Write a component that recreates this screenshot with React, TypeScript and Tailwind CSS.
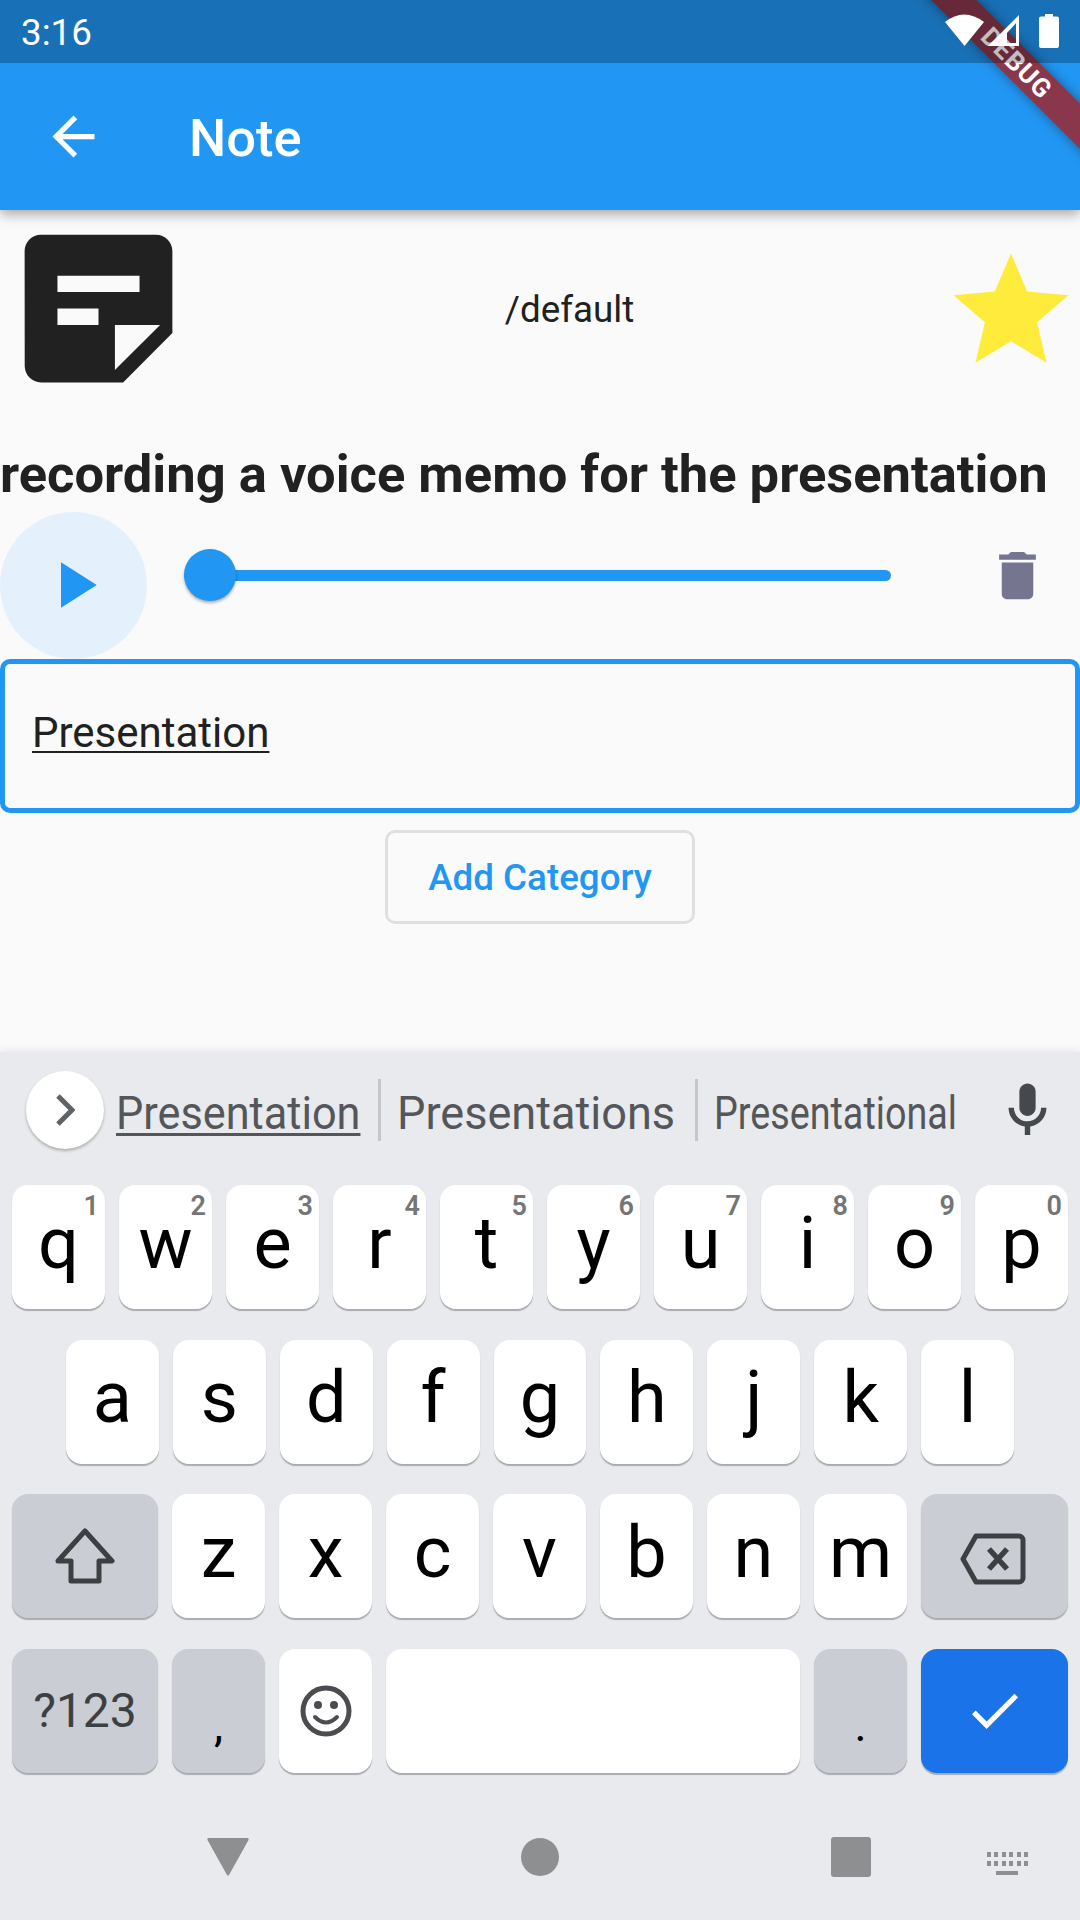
import React from "react";

const font = { fontFamily: "Roboto, sans-serif" };

function Key({ label, hint, className = "" }: { label?: React.ReactNode; hint?: string; className?: string }) {
  return (
    <div className={`relative h-[124px] rounded-[16px] flex items-center justify-center shadow-[0_2px_1px_#a9abb0] ${className}`}>
      {hint && <span className="absolute top-[5px] right-[6px] text-[27px] leading-[32px] font-semibold text-[#757575]">{hint}</span>}
      {label}
    </div>
  );
}

const Letter = ({ c }: { c: string }) => <span className="text-[72px] leading-none text-black pb-[7px]">{c}</span>;

function LetterKey({ c, hint }: { c: string; hint?: string }) {
  return <Key className="w-[93px] bg-white" label={<Letter c={c} />} hint={hint} />;
}

function App() {
  const row1 = "qwertyuiop".split("");
  const row2 = "asdfghjkl".split("");
  const row3 = "zxcvbnm".split("");
  return (
    <div style={font} className="relative w-[1080px] h-[1920px] overflow-hidden bg-[#fafafa] flex flex-col">
      {/* App bar */}
      <header className="relative z-10 h-[210px] shrink-0 bg-[#2196f3] pt-[63px] flex items-center shadow-[0_4px_12px_rgba(0,0,0,0.35)]">
        <svg viewBox="0 0 24 24" className="w-[63px] h-[63px] ml-[42px] fill-white">
          <path d="M20 11H7.83l5.59-5.59L12 4l-8 8 8 8 1.41-1.41L7.83 13H20v-2z" />
        </svg>
        <h1 className="ml-[84px] mt-[4px] text-[52.5px] font-medium text-white leading-none">Note</h1>
      </header>

      {/* Debug banner */}
      <div className="absolute z-20 left-[817px] top-[47px] w-[400px] h-[31.5px] rotate-45 bg-[#a81c1c]/[0.78] shadow-[0_0_12px_rgba(0,0,0,0.4)] flex items-center justify-center">
        <span className="text-[26px] font-bold tracking-[1px] text-white leading-none">DEBUG</span>
      </div>

      {/* Status bar */}
      <div className="absolute z-30 top-0 left-0 w-full h-[63px] bg-black/25 flex items-center">
        <span className="ml-[21px] mt-[4px] text-[36.75px] text-white leading-none">3:16</span>
        <svg viewBox="0 0 135 48" className="absolute left-[945px] top-[8px] w-[135px] h-[48px] fill-white">
          <path d="M0 14 Q19 -1 39 14 L19.500 38z" />
          <path d="M43 38 L74 7 V38z M71 15 L53 35 H71z" fillRule="evenodd" />
          <path d="M62 24.500 L53 35 H62z" />
          <path d="M100 6 V8.500 H96 a2 2 0 0 0 -2 2 V38 a2 2 0 0 0 2 2 H112 a2 2 0 0 0 2 -2 V10.500 a2 2 0 0 0 -2 -2 H108 V6z" />
        </svg>
      </div>

      {/* Note row */}
      <section className="h-[196px] shrink-0 flex items-center">
        <svg viewBox="0 0 24 24" className="w-[197px] h-[197px] fill-[#212121] shrink-0">
          <path d="M19,3H4.99C3.89,3,3,3.9,3,5l0.01,14c0,1.1,0.89,2,1.99,2h10l6-6V5C21,3.9,20.1,3,19,3z M7,8h10v2H7V8z M12,14H7v-2h5V14z M14,19.5V14h5.5L14,19.5z" />
        </svg>
        <span className="flex-1 mt-[4px] text-center text-[36.75px] text-[#212121] leading-none">/default</span>
        <svg viewBox="0 0 24 24" className="w-[138px] h-[138px] fill-[#ffeb3b] shrink-0 mt-[6px]">
          <path d="M12 17.27L18.18 21l-1.64-7.03L22 9.24l-7.19-.61L12 2 9.19 8.63 2 9.24l5.46 4.73L5.82 21z" />
        </svg>
      </section>

      <h2 className="h-[106px] shrink-0 pt-[41px] text-[52.5px] font-bold text-[#212121] leading-[55px] whitespace-nowrap">
        recording a voice memo for the presentation
      </h2>

      {/* Player */}
      <section className="h-[147px] shrink-0 flex items-start">
        <div className="w-[147px] h-[147px] rounded-full bg-[#e4f1fc] flex items-center justify-center shrink-0">
          <svg viewBox="0 0 24 24" className="w-[78px] h-[78px] fill-[#2196f3] mb-[2px]">
            <path d="M8 5v14l11-7z" />
          </svg>
        </div>
        <div className="relative ml-[37px] mt-[37px] w-[707px] h-[52px] flex items-center">
          <div className="w-full h-[11px] rounded-full bg-[#2196f3]" />
          <div className="absolute left-0 top-0 w-[52px] h-[52px] rounded-full bg-[#2196f3] shadow-[0_2px_3px_rgba(0,0,0,0.3)]" />
        </div>
        <svg viewBox="0 0 24 24" className="w-[63px] h-[63px] fill-[#757590] ml-[95px] mt-[32px] shrink-0">
          <path d="M6 19c0 1.100.9 2 2 2h8c1.100 0 2-.9 2-2V7H6v12zM19 4h-3.500l-1-1h-5l-1 1H5v2h14V4z" />
        </svg>
      </section>

      {/* Input */}
      <div className="h-[154px] shrink-0 border-[5px] border-[#2196f3] rounded-[10px] flex items-center pl-[27px] pb-[6px]">
        <span className="text-[42px] leading-none text-[#212121] underline underline-offset-[4px] decoration-[2px]">Presentation</span>
      </div>

      <button className="self-center mt-[17px] w-[310px] h-[94px] shrink-0 border-[3px] border-[#e0e0e0] rounded-[10px] pt-[2px] text-[36.75px] font-medium text-[#2196f3] leading-none">
        Add Category
      </button>

      <div className="flex-1" />

      {/* Keyboard */}
      <section className="relative h-[868px] shrink-0 bg-[#e8eaed] shadow-[0_-2px_8px_rgba(0,0,0,0.08)]">
        <div className="h-[116px] mb-[17px] flex items-center">
          <div className="ml-[26px] w-[78px] h-[78px] rounded-full bg-white shadow-[0_2px_3px_rgba(0,0,0,0.25)] flex items-center justify-center shrink-0">
            <svg viewBox="0 0 20 32" className="w-[20px] h-[32px] fill-none stroke-[#5f6368] stroke-[5]">
              <path d="M3 2 L17 16 L3 30" />
            </svg>
          </div>
          <span className="ml-[12px] w-[262px] shrink-0 pt-[6px] text-[46px] leading-none text-[#555659]">
            <span className="inline-block origin-left scale-x-[0.94] underline underline-offset-[4px] decoration-[3px]">Presentation</span>
          </span>
          <div className="w-[3px] h-[62px] bg-[#c4c6ca] shrink-0" />
          <span className="ml-[16px] w-[298px] shrink-0 pt-[6px] text-[46px] leading-none text-[#555659]">
            <span className="inline-block origin-left scale-x-[0.98]">Presentations</span>
          </span>
          <div className="w-[3px] h-[62px] bg-[#c4c6ca] shrink-0" />
          <span className="ml-[16px] w-[281px] shrink-0 pt-[6px] text-[46px] leading-none text-[#555659]">
            <span className="inline-block origin-left scale-x-[0.82]">Presentational</span>
          </span>
          <svg viewBox="0 0 24 24" className="w-[65px] h-[65px] fill-[#45484d] shrink-0">
            <path d="M12 14c1.660 0 3-1.340 3-3V5c0-1.660-1.340-3-3-3S9 3.340 9 5v6c0 1.660 1.340 3 3 3z" />
            <path d="M17 11c0 2.760-2.240 5-5 5s-5-2.240-5-5H5c0 3.530 2.610 6.430 6 6.920V21h2v-3.080c3.390-.49 6-3.390 6-6.920h-2z" />
          </svg>
        </div>

        <div className="flex flex-col gap-[30.5px]">
          <div className="flex gap-[14px] px-[12px]">
            {row1.map((c, i) => (
              <LetterKey key={c} c={c} hint={String((i + 1) % 10)} />
            ))}
          </div>
          <div className="flex gap-[14px] px-[66px]">
            {row2.map((c) => (
              <LetterKey key={c} c={c} />
            ))}
          </div>
          <div className="flex gap-[14px] px-[12px]">
            <Key
              className="w-[146px] bg-[#cacdd4]"
              label={
                <svg viewBox="0 0 60 56" className="w-[60px] h-[56px] fill-none stroke-[#3c4043] stroke-[5]" strokeLinejoin="round">
                  <path d="M30 3 L57 33 H44 V53 H16 V33 H3 z" />
                </svg>
              }
            />
            {row3.map((c) => (
              <LetterKey key={c} c={c} />
            ))}
            <Key
              className="w-[147px] bg-[#cacdd4]"
              label={
                <svg viewBox="0 0 66 52" className="w-[66px] h-[52px] mt-[5px] mr-[3px] fill-none stroke-[#3c4043] stroke-[5]" strokeLinejoin="round">
                  <path d="M3 26 L16 3 H59 a4 4 0 0 1 4 4 V45 a4 4 0 0 1 -4 4 H16 z" />
                  <path d="M29 16 L47 36 M47 16 L29 36" strokeWidth="5.500" />
                </svg>
              }
            />
          </div>
          <div className="flex gap-[14px] px-[12px]">
            <Key className="w-[146px] bg-[#cacdd4]" label={<span className="text-[48px] leading-none text-[#3c4043]">?123</span>} />
            <Key className="w-[93px] bg-[#cacdd4] pt-[29px]" label={<span className="text-[46px] leading-none text-black">,</span>} />
            <Key
              className="w-[93px] bg-white"
              label={
                <svg viewBox="0 0 52 52" className="w-[52px] h-[52px] fill-none stroke-[#4a4c50] stroke-[5]" strokeLinecap="round">
                  <circle cx="26" cy="26" r="23" />
                  <circle cx="18" cy="20" r="4" className="fill-[#4a4c50] stroke-none" />
                  <circle cx="34" cy="20" r="4" className="fill-[#4a4c50] stroke-none" />
                  <path d="M15 32 Q26 43 37 32" strokeWidth="4" />
                </svg>
              }
            />
            <Key className="w-[414px] bg-white" />
            <Key className="w-[93px] bg-[#cacdd4] pt-[29px]" label={<span className="text-[46px] leading-none text-black">.</span>} />
            <Key
              className="w-[147px] bg-[#1a73e8]"
              label={
                <svg viewBox="0 0 24 24" className="w-[63px] h-[63px] fill-white">
                  <path d="M9 16.170L4.830 12l-1.410 1.410L9 19 21 7l-1.410-1.410z" />
                </svg>
              }
            />
          </div>
        </div>

        {/* Nav bar */}
        <div className="absolute bottom-[43px] left-0 w-full h-[40px] flex items-center">
          <svg viewBox="0 0 42 38" className="ml-[207px] w-[42px] h-[38px] fill-[#8e8f91] shrink-0">
            <path d="M1 0 H41 Q42 0 41.500 2 L22 37 Q21 38 20 37 L.5 2 Q0 0 1 0z" />
          </svg>
          <div className="ml-[272px] w-[38px] h-[38px] rounded-full bg-[#8e8f91] shrink-0" />
          <div className="ml-[272px] w-[40px] h-[40px] rounded-[3px] bg-[#8e8f91] shrink-0" />
          <svg viewBox="0 0 41 24" className="ml-[116px] w-[41px] h-[24px] fill-[#8e8f91] shrink-0 mt-[14px]">
            <path d="M0 0h4v5H0zM7 0h4v5H7zM15 0h4v5h-4zM22 0h4v5h-4zM30 0h4v5h-4zM37 0h4v5h-4zM0 9h4v5H0zM7 9h4v5H7zM15 9h4v5h-4zM22 9h4v5h-4zM30 9h4v5h-4zM37 9h4v5h-4zM9 19h22v4H9z" />
          </svg>
        </div>
      </section>
    </div>
  );
}

export default App;
